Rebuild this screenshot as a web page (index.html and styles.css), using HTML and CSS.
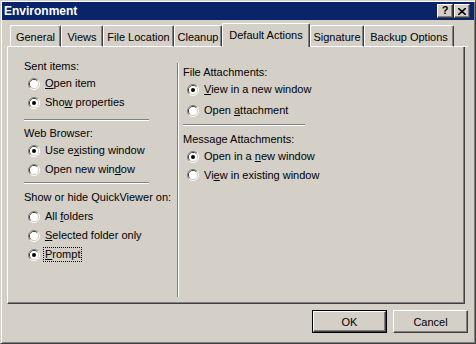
FILE: index.html
```html
<!DOCTYPE html>
<html>
<head>
<meta charset="utf-8">
<link rel="stylesheet" href="styles.css">
</head>
<body>
<svg class="defs" width="0" height="0">
  <defs>
    <symbol id="radio" viewBox="0 0 12 12">
      <path d="M2.11 9.89 A5.5 5.5 0 0 1 9.89 2.11" fill="none" stroke="#808080"/>
      <path d="M9.89 2.11 A5.5 5.5 0 0 1 2.11 9.89" fill="none" stroke="#ffffff"/>
      <path d="M2.82 9.18 A4.5 4.5 0 0 1 9.18 2.82" fill="none" stroke="#404040"/>
      <path d="M9.18 2.82 A4.5 4.5 0 0 1 2.82 9.18" fill="none" stroke="#d4d0c8"/>
      <circle cx="6" cy="6" r="4" fill="#ffffff"/>
    </symbol>
    <symbol id="radio-on" viewBox="0 0 12 12">
      <use href="#radio"/>
      <circle cx="6" cy="6" r="2" fill="#000000"/>
    </symbol>
  </defs>
</svg>
<div class="window">
  <div class="titlebar">
    <span class="title">Environment</span>
    <div class="tb-buttons">
      <span class="tb-btn help">?</span>
      <span class="tb-btn close"><svg width="8" height="7" viewBox="0 0 8 7"><path d="M0 0 L8 7 M8 0 L0 7" stroke="#000" stroke-width="1.6"/></svg></span>
    </div>
  </div>
  <div class="body">
    <div class="tabs">
      <div class="tab-lead"></div>
      <div class="tab t-general">General</div>
      <div class="tab t-views">Views</div>
      <div class="tab t-file">File Location</div>
      <div class="tab t-cleanup">Cleanup</div>
      <div class="tab active t-default">Default Actions</div>
      <div class="tab t-sig">Signature</div>
      <div class="tab t-backup">Backup Options</div>
      <div class="tab-fill"></div>
    </div>
    <div class="panel">
      <div class="col left">
        <div class="hdr">Sent items:</div>
        <div class="row"><svg class="rb"><use href="#radio"/></svg><span><u>O</u>pen item</span></div>
        <div class="row"><svg class="rb"><use href="#radio-on"/></svg><span>Sho<u>w</u> properties</span></div>
        <div class="sep sep-l sep1"></div>
        <div class="hdr">Web Browser:</div>
        <div class="row"><svg class="rb"><use href="#radio-on"/></svg><span>Use e<u>x</u>isting window</span></div>
        <div class="row"><svg class="rb"><use href="#radio"/></svg><span>Open new win<u>d</u>ow</span></div>
        <div class="sep sep-l sep2"></div>
        <div class="hdr">Show or hide QuickViewer on:</div>
        <div class="row first"><svg class="rb"><use href="#radio"/></svg><span>All <u>f</u>olders</span></div>
        <div class="row"><svg class="rb"><use href="#radio"/></svg><span><u>S</u>elected folder only</span></div>
        <div class="row"><svg class="rb"><use href="#radio-on"/></svg><span class="focus"><u>P</u>rompt</span></div>
      </div>
      <div class="vdiv"></div>
      <div class="col right">
        <div class="hdr">File Attachments:</div>
        <div class="row"><svg class="rb"><use href="#radio-on"/></svg><span><u>V</u>iew in a new window</span></div>
        <div class="row second"><svg class="rb"><use href="#radio"/></svg><span>Open <u>a</u>ttachment</span></div>
        <div class="sep sep-r"></div>
        <div class="hdr">Message Attachments:</div>
        <div class="row"><svg class="rb"><use href="#radio-on"/></svg><span>Open in a <u>n</u>ew window</span></div>
        <div class="row short"><svg class="rb"><use href="#radio"/></svg><span>Vi<u>e</u>w in existing window</span></div>
      </div>
    </div>
    <div class="buttons">
      <div class="btn-default"><div class="btn">OK</div></div>
      <div class="btn">Cancel</div>
    </div>
  </div>
</div>
</body>
</html>
```

FILE: styles.css
```css
* { box-sizing: border-box; }
html, body {
  margin: 0;
  padding: 0;
  background: #d4d0c8;
}
body {
  font-family: "Liberation Sans", Arial, sans-serif;
  font-size: 11px;
  color: #000;
}
.defs { position: absolute; width: 0; height: 0; }
.window {
  width: 476px;
  height: 344px;
  background: #d4d0c8;
  border: 1px solid;
  border-color: #d4d0c8 #404040 #404040 #d4d0c8;
  box-shadow: inset 1px 1px #ffffff, inset -1px -1px #808080;
  padding: 1px;
}
.titlebar {
  height: 18px;
  background: #0a246a;
  display: flex;
  align-items: center;
  justify-content: space-between;
  padding: 0 4px 0 2px;
}
.title {
  color: #fff;
  font-weight: bold;
  font-size: 12px;
}
.tb-buttons {
  display: flex;
  gap: 1px;
}
.tb-btn {
  width: 16px;
  height: 14px;
  background: #d4d0c8;
  border: 1px solid;
  border-color: #ffffff #404040 #404040 #ffffff;
  box-shadow: inset -1px -1px #808080;
  display: flex;
  align-items: center;
  justify-content: center;
  font-weight: bold;
  font-size: 11px;
  line-height: 1;
}
.tb-btn.help { padding-bottom: 1px; }
.body {
  padding: 3px 5px 0 5px;
}
.tabs {
  display: flex;
  align-items: flex-end;
  height: 24px;
}
.tab-lead {
  width: 3px;
  height: 1px;
  background: #fff;
}
.tab-fill {
  flex: 1;
  height: 1px;
  background: #fff;
  margin-right: 1px;
}
.tab {
  height: 22px;
  border-top: 1px solid #fff;
  border-left: 1px solid #fff;
  border-right: 1px solid #404040;
  border-bottom: 1px solid #fff;
  border-radius: 2px 2px 0 0;
  box-shadow: inset -1px 0 #808080;
  display: flex;
  align-items: center;
  justify-content: center;
  white-space: nowrap;
  padding-top: 1px;
}
.tab.active {
  height: 24px;
  border-bottom: none;
  padding-bottom: 3px;
}
.t-general { width: 51px; }
.t-views { width: 42px; }
.t-file { width: 71px; }
.t-cleanup { width: 48px; }
.t-default { width: 88px; }
.t-sig { width: 54px; }
.t-backup { width: 90px; }
.panel {
  width: 458px;
  height: 257px;
  border-left: 1px solid #fff;
  border-right: 1px solid #404040;
  border-bottom: 1px solid #404040;
  box-shadow: inset -1px -1px #808080;
  display: flex;
  padding-left: 16px;
}
.col {
  display: flex;
  flex-direction: column;
}
.col.left {
  width: 153px;
  padding-top: 12px;
}
.col.right {
  padding-top: 18px;
  padding-left: 4px;
}
.vdiv {
  width: 2px;
  margin: 16px 0 6px 0;
  border-left: 1px solid #808080;
  border-right: 1px solid #fff;
}
.hdr {
  height: 15px;
  line-height: 15px;
  white-space: nowrap;
}
.row {
  height: 19px;
  display: flex;
  align-items: center;
  padding-left: 4px;
  white-space: nowrap;
}
.row.first { margin-top: 2px; }
.row.second { margin-top: 2px; }
.row.short { height: 18px; }
.rb {
  width: 12px;
  height: 12px;
  margin-right: 1px;
  flex: none;
}
.row span {
  margin-left: 4px;
  line-height: 13px;
}
.focus {
  outline: 1px dotted #000;
  outline-offset: 0;
  padding: 0 1px;
  margin-left: 3px !important;
}
.sep {
  height: 2px;
  border-top: 1px solid #808080;
  border-bottom: 1px solid #fff;
}
.sep-l { width: 125px; }
.sep1 { margin: 7px 0 5px 0; }
.sep2 { margin: 3px 0 6px 0; }
.sep-r { width: 122px; margin: 4px 0 6px 0; }
.buttons {
  display: flex;
  justify-content: flex-end;
  gap: 6px;
  margin-top: 6px;
  padding-right: 1px;
}
.btn {
  width: 75px;
  height: 23px;
  background: #d4d0c8;
  border: 1px solid;
  border-color: #ffffff #404040 #404040 #ffffff;
  box-shadow: inset -1px -1px #808080;
  display: flex;
  align-items: center;
  justify-content: center;
}
.btn-default {
  border: 1px solid #000;
}
.btn-default .btn {
  width: 73px;
  height: 21px;
}
```
